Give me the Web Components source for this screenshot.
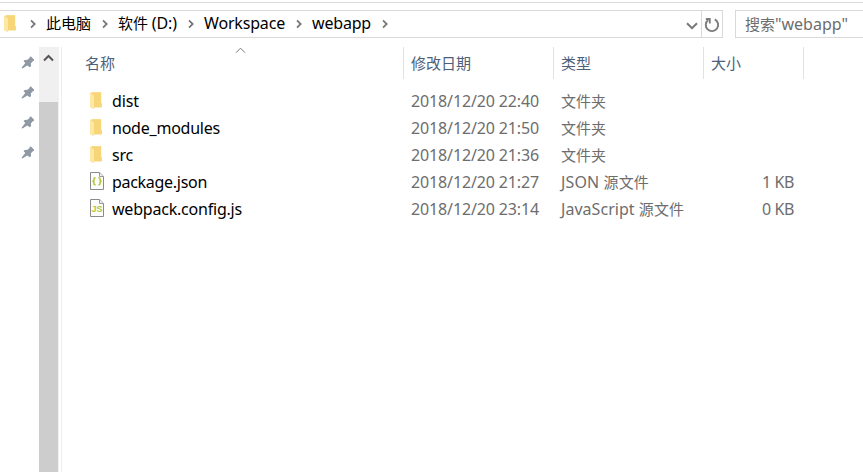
<!DOCTYPE html>
<html lang="zh-CN">
<head>
<meta charset="utf-8">
<title>webapp</title>
<style>
html,body{margin:0;height:100%;overflow:hidden;background:#fff}
body{font:15px/20px "Noto Sans","Noto Sans CJK SC",sans-serif;color:#000}
</style>
</head>
<body>
<file-explorer></file-explorer>
<script>
function define(name, html, setup) {
  customElements.define(name, class extends HTMLElement {
    connectedCallback() {
      if (this.shadowRoot) return;
      const t = document.createElement('template');
      t.innerHTML = html;
      this.attachShadow({mode: 'open'}).append(t.content.cloneNode(true));
      if (setup) setup(this, this.shadowRoot);
    }
  });
}

/* One line of text, tracked so that it fills the width in its "fit" attribute.
   Latin runs are set slightly larger than the Chinese ones. */
define('fit-label', `<style>:host{display:block;height:20px;white-space:nowrap;flex:none}.line{display:inline-block;white-space:pre}.latin{font-size:16px;line-height:16px}</style><span class="line"></span>`, (el, root) => {
  const s = root.querySelector('.line');
  const text = el.getAttribute('text');
  for (const run of text.match(/[\u4e00-\u9fff]+|[^\u4e00-\u9fff]+/g)) {
    const part = document.createElement('span');
    part.textContent = run;
    if (!/[\u4e00-\u9fff]/.test(run)) part.className = 'latin';
    s.append(part);
  }
  const w = Number(el.getAttribute('fit'));
  s.style.letterSpacing = (w - s.getBoundingClientRect().width) / text.length + 'px';
  el.style.width = w + 'px';
});

define('folder-icon', `<style>:host{display:block;width:12px;height:17px;flex:none}svg{display:block}</style>
<svg width="12" height="17" viewBox="0 0 12 17"><path d="M.3 1 2 .2h9.2v11H12V15l-.6.5H4V17L.3 15.2z" fill="#f9d77c"/><path d="M.3 1 4 3.4V17L.3 15.2z" fill="#ffe8a2"/><path d="M2 .4h8.9v10.8l-.7 1V15H4V3.2z" fill="#f7d579"/></svg>`);

define('file-icon', `<style>:host{display:block;width:14px;height:18px;flex:none}svg{display:block}text{font:bold 9.5px "Liberation Sans",sans-serif;fill:#b5c433}</style>
<svg width="14" height="18" viewBox="0 0 14 18"><path d="M.5.5h9.2l3.8 3.8v13.2H.5z" fill="#fdfdfd" stroke="#8b8b8b"/><path d="M9.5.5v4h4" fill="#eee" stroke="#999"/><g id="art"></g></svg>`, (el, root) => {
  root.querySelector('#art').innerHTML = el.getAttribute('kind') === 'js'
    ? '<text x="1.5" y="13" textLength="11" lengthAdjust="spacingAndGlyphs">JS</text>'
    : '<path d="M5.6 5.8H5q-1 0-1 1v1.4L3 9.3l1 1.1v1.4q0 1 1 1h.6M8.4 5.8H9q1 0 1 1v1.4l1 1.1-1 1.1v1.4q0 1-1 1h-.6" fill="none" stroke="#b5c433" stroke-width="1.5"/>';
});

define('pin-icon', `<style>:host{display:block;width:14px;height:14px}svg{display:block}</style>
<svg width="14" height="14" viewBox="0 0 14 14"><path d="M8.8.8 10 .5l3.1 3.3-.3 1.3-1 .2-2 2.2.3 2.6-1.3 1.2-2.5-1.8-4.8 3-.8-.2v-.7l3.6-4.5-1.8-2.2L3.8 3.9l2.7-.1 2-1.9z" fill="#8e99a3"/></svg>`);

define('crumb-arrow', `<style>:host{display:block;width:6px;height:10px;flex:none}svg{display:block}</style>
<svg width="6" height="10" viewBox="0 0 6 10"><path d="M1 1.3 4.7 5 1 8.7" fill="none" stroke="#777" stroke-width="1.8"/></svg>`);

define('address-bar', `<style>
:host{display:flex;height:26px;border:1px solid #d9d9d9;border-left:0;width:722px;box-sizing:content-box}
.path{display:flex;align-items:center;flex:1;padding-left:4px}
.path crumb-arrow{margin-top:-1px}
folder-icon{margin:-2px 14px 0 0}
fit-label{margin:-2px 11px 0 10px}
.drop{margin-left:auto;margin-right:3px;margin-top:4px}
.reload{width:20px;border-left:1px solid #d9d9d9;display:grid;place-items:center}
.reload svg{margin-top:2px}
</style>
<div class="path"><folder-icon></folder-icon><crumb-arrow></crumb-arrow>
<fit-label text="此电脑" fit="45"></fit-label><crumb-arrow></crumb-arrow>
<fit-label text="软件 (D:)" fit="59"></fit-label><crumb-arrow></crumb-arrow>
<fit-label text="Workspace" fit="81"></fit-label><crumb-arrow></crumb-arrow>
<fit-label text="webapp" fit="59"></fit-label><crumb-arrow></crumb-arrow>
<svg class="drop" width="12" height="8" viewBox="0 0 12 8"><path d="M1 1.2 6 6.2l5-5" fill="none" stroke="#777" stroke-width="2"/></svg></div>
<div class="reload"><svg width="16" height="16" viewBox="0 0 16 16"><path d="M10.8 2.4A6.2 6.2 0 1 1 4.2 3" fill="none" stroke="#7c7c7c" stroke-width="1.9"/><path d="M1.8 2h4v4.4" fill="none" stroke="#7c7c7c" stroke-width="1.8"/></svg></div>`);

define('search-box', `<style>:host{display:flex;align-items:center;height:26px;flex:1;border:1px solid #d9d9d9;border-right:0;padding-left:9px;color:#6d6d6d}</style><fit-label text='搜索"webapp"' fit="103"></fit-label>`);

define('nav-strip', `<style>
:host{display:flex;width:61px;flex:none;border-right:1px solid #ededed}
.pins{width:39px;display:flex;flex-direction:column;gap:16px;padding:9px 0 0 21px;box-sizing:border-box}
.bar{width:20px;background:#f0f0f0}
.up{height:55px;box-sizing:border-box;padding:7px 0 0 4px}
.thumb{width:19px;height:100%;background:#cdcdcd}
svg{display:block}
</style><div class="pins"><pin-icon></pin-icon><pin-icon></pin-icon><pin-icon></pin-icon><pin-icon></pin-icon></div>
<div class="bar"><div class="up"><svg width="11" height="8" viewBox="0 0 11 8"><path d="M1 6.5 5.5 2 10 6.5" fill="none" stroke="#555" stroke-width="2"/></svg></div><div class="thumb"></div></div>`);

define('column-header', `<style>
:host{display:grid;grid-template-columns:342px 150px 150px 100px;height:32px;color:#4c607a}
div{position:relative;border-right:1px solid #e2e2e2;padding:6px 0 0 7px;box-sizing:border-box}
.first{padding-left:23px}
svg{position:absolute;left:173px;top:0}
</style><div class="first"><fit-label text="名称" fit="30"></fit-label><svg width="11" height="7" viewBox="0 0 11 7"><path d="M1 5.7 5.5 1.2 10 5.7" fill="none" stroke="#777" stroke-width="1"/></svg></div>
<div><fit-label text="修改日期" fit="60"></fit-label></div><div><fit-label text="类型" fit="30"></fit-label></div><div><fit-label text="大小" fit="30"></fit-label></div>`);

define('file-entry', `<style>
:host{display:grid;grid-template-columns:349px 150px 150px 83px;height:27px;align-items:center;color:#6d6d6d}
.name{display:flex;align-items:center;color:#000;padding-left:28px}
.icon{width:22px;margin-top:-1px}
.size{justify-self:end}
</style><div class="name"><div class="icon"><slot></slot></div><slot name="name"></slot></div><div><slot name="date"></slot></div><div><slot name="type"></slot></div><div class="size"><slot name="size"></slot></div>`);

define('file-table', `<style>
:host{display:block;flex:1}
.rows{padding-top:8px}
</style><column-header></column-header><div class="rows"></div>`, (el, root) => {
  const files = [
    ['folder','dist',27,'2018/12/20 22:40','文件夹',45,''],
    ['folder','node_modules',108,'2018/12/20 21:50','文件夹',45,''],
    ['folder','src',21,'2018/12/20 21:36','文件夹',45,''],
    ['json','package.json',95,'2018/12/20 21:27','JSON 源文件',88,'1 KB'],
    ['js','webpack.config.js',130,'2018/12/20 23:14','JavaScript 源文件',123,'0 KB']
  ];
  root.querySelector('.rows').innerHTML = files.map(([k,n,nw,d,t,tw,s]) =>
    `<file-entry>${k === 'folder' ? '<folder-icon></folder-icon>' : `<file-icon kind="${k}"></file-icon>`}
    <fit-label slot="name" text="${n}" fit="${nw}"></fit-label><fit-label slot="date" text="${d}" fit="128"></fit-label>
    <fit-label slot="type" text="${t}" fit="${tw}"></fit-label>${s ? `<fit-label slot="size" text="${s}" fit="32"></fit-label>` : ''}</file-entry>`).join('');
});

define('file-explorer', `<style>
:host{display:flex;flex-direction:column;height:472px;box-sizing:border-box;padding-top:2px;overflow:hidden}
.rule{height:1px;background:#dcdcdc;margin-bottom:7px;flex:none}
.top{display:flex;gap:12px;height:28px;margin-bottom:9px;flex:none}
.main{display:flex;flex:1;min-height:0}
nav-strip{overflow:hidden}
</style><div class="rule"></div><div class="top"><address-bar></address-bar><search-box></search-box></div>
<div class="main"><nav-strip></nav-strip><file-table></file-table></div>`);
</script>
</body>
</html>
